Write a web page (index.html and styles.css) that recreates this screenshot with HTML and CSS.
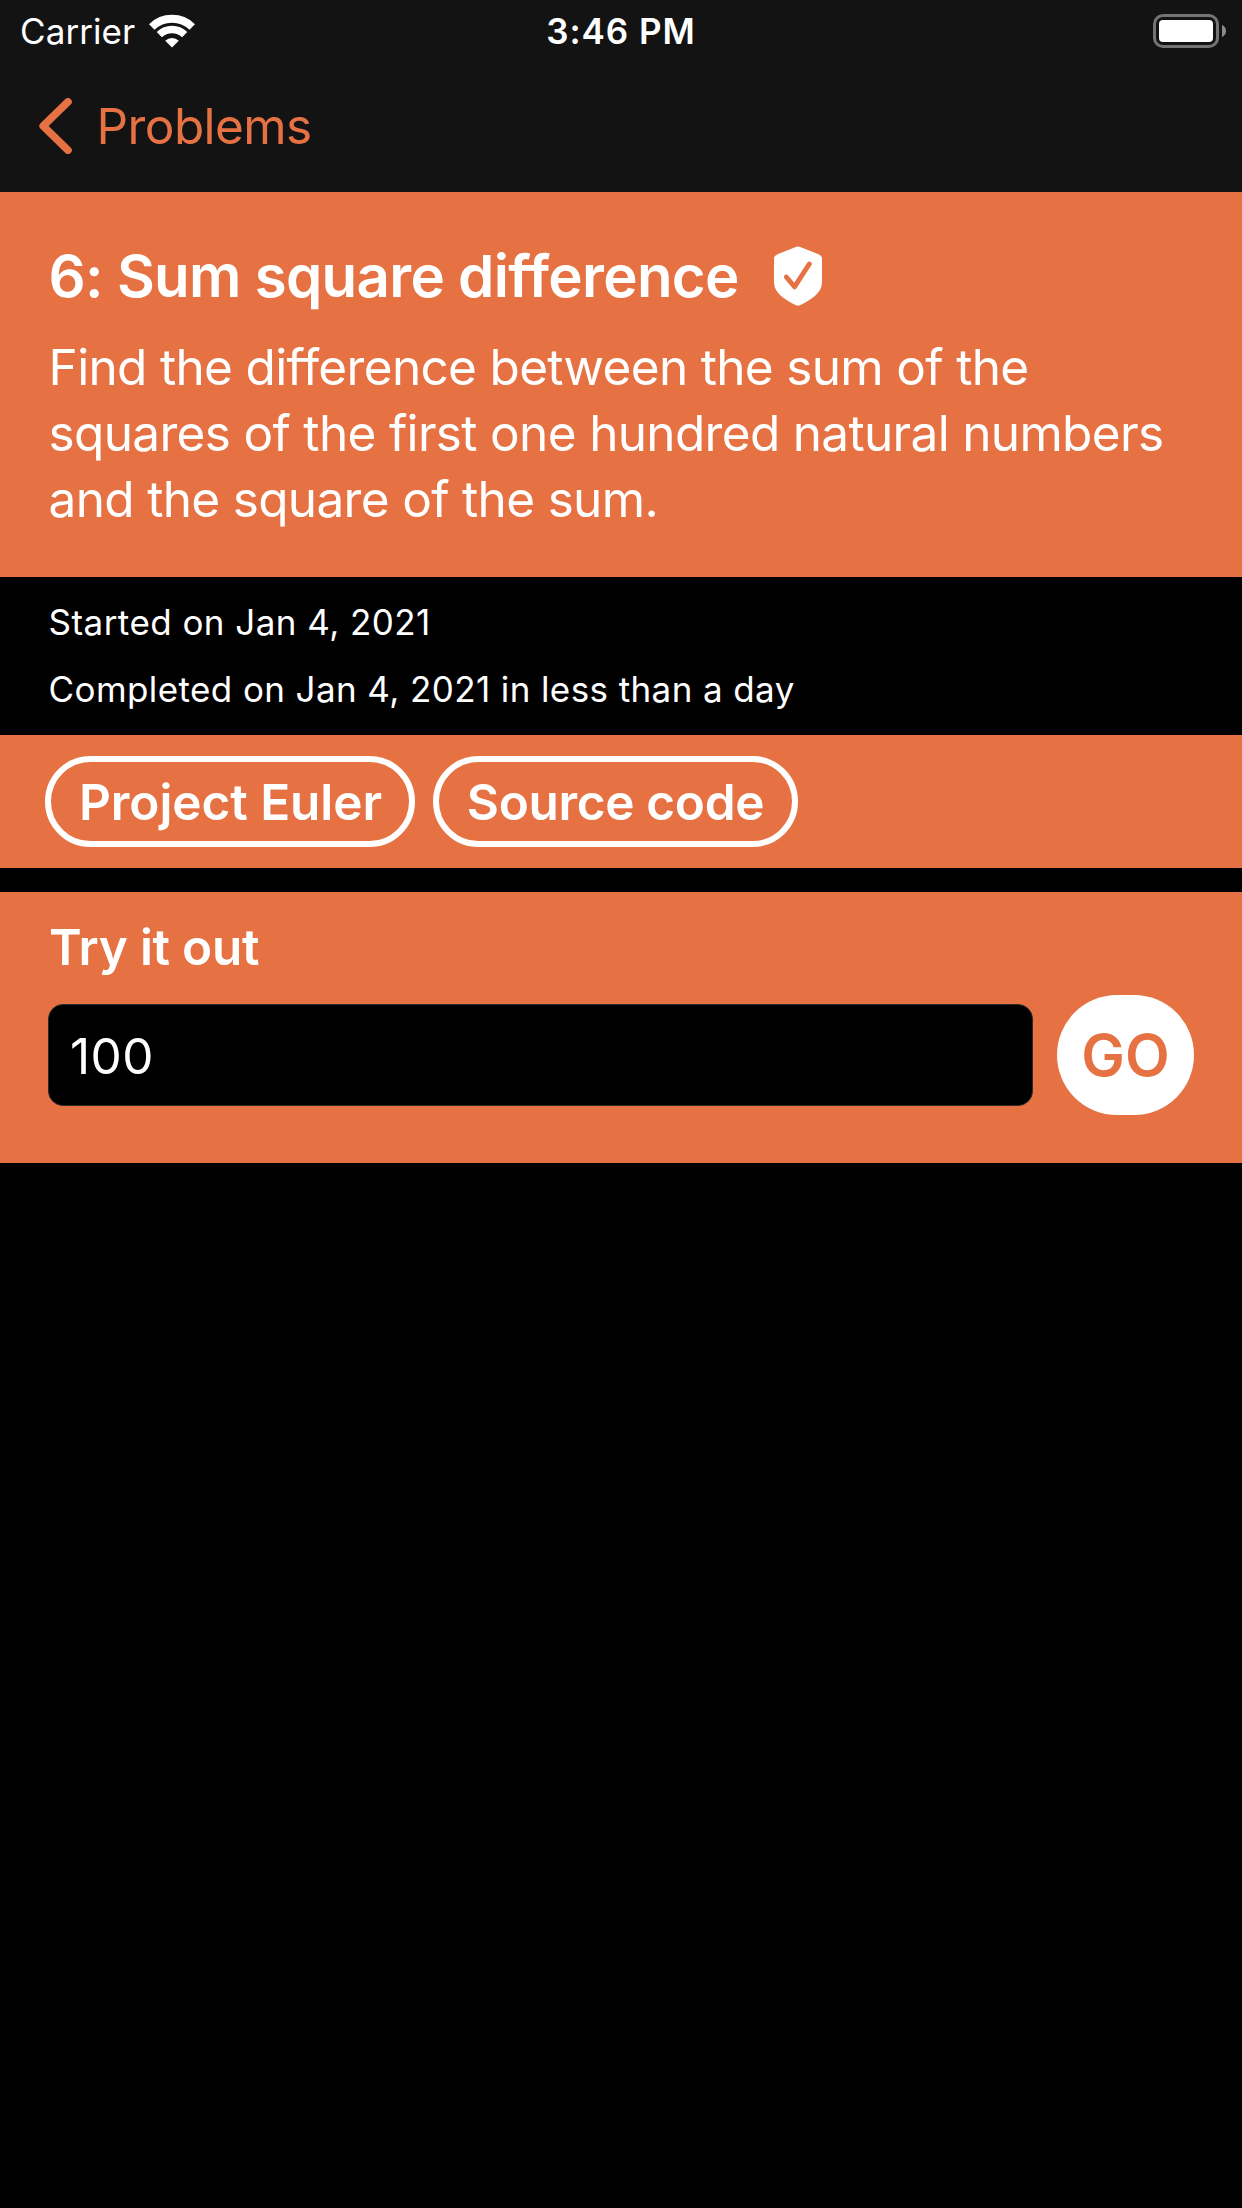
FILE: index.html
```html
<!DOCTYPE html>
<html lang="en">
<head>
<meta charset="utf-8">
<title>Sum square difference</title>
<link rel="stylesheet" href="styles.css">
</head>
<body>
<header class="top">
  <div class="status">
    <div class="carrier">
      <span>Carrier</span>
      <svg class="wifi" width="48" height="34" viewBox="0 0 48 34" fill="none" stroke="#fff">
        <path d="M3.8 13A29 29 0 0 1 44.2 13" stroke-width="8"/>
        <path d="M11.3 20.6A18.3 18.3 0 0 1 36.7 20.6" stroke-width="7.4"/>
        <path d="M24 33.5L17.2 26.7A9.7 9.7 0 0 1 30.8 26.7Z" fill="#fff" stroke="none"/>
      </svg>
    </div>
    <time class="clock">3:46 PM</time>
    <svg class="battery" width="73" height="34" viewBox="0 0 73 34">
      <rect x="1.5" y="1.5" width="63" height="31" rx="8.5" fill="none" stroke="#747474" stroke-width="3"/>
      <rect x="6" y="6" width="54" height="22" rx="4" fill="#fff"/>
      <path d="M69 11Q73 12.8 73 17Q73 21.2 69 23Z" fill="#8a8a8a"/>
    </svg>
  </div>
  <nav class="nav">
    <svg width="33" height="56" viewBox="0 0 33 56" fill="none" stroke="currentColor" stroke-width="7.6" stroke-linecap="round" stroke-linejoin="round"><path d="M29 3.8L4.2 28L29 52.2"/></svg>
    <span>Problems</span>
  </nav>
</header>
<main>
  <section class="summary">
    <div class="title-row">
      <h1 class="title">6: Sum square difference</h1>
      <svg width="48" height="60" viewBox="0 0 48 60">
        <path d="M21.8 .9Q24 0 26.2 .9L44 8Q48 9.8 48 12.5V36.5C48 47 37 53.5 26.5 59Q24 60.2 21.5 59C11 53.5 0 47 0 36.5V12.5Q0 9.8 4 8Z" fill="#fff"/>
        <path d="M12.3 31L20.5 40.8L35.3 18" fill="none" stroke="#e67243" stroke-width="4.9" stroke-linecap="round" stroke-linejoin="round"/>
      </svg>
    </div>
    <p class="description">Find the difference between the sum of the<br>squares of the first one hundred natural numbers<br>and the square of the sum.</p>
  </section>
  <section class="dates">
    <p class="started">Started on Jan 4, 2021</p>
    <p>Completed on Jan 4, 2021 in less than a day</p>
  </section>
  <section class="links">
    <button class="pill pill-euler">Project Euler</button>
    <button class="pill pill-source">Source code</button>
  </section>
  <section class="try">
    <h2 class="try-title">Try it out</h2>
    <div class="try-row">
      <div class="field">100</div>
      <button class="go">GO</button>
    </div>
  </section>
</main>
</body>
</html>
```
FILE: styles.css
```css
* { box-sizing: border-box; }
body {
  margin: 0;
  min-height: 2208px;
  background: #000;
  color: #fff;
  font-family: Inter, "Liberation Sans", sans-serif;
}
h1, h2, p { margin: 0; }
button { font: inherit; color: inherit; padding: 0; }
svg { display: block; flex: none; }

.top { height: 192px; background: #131313; }
.status {
  display: grid;
  grid-template-columns: 1fr auto 1fr;
  align-items: center;
  height: 60px;
  padding: 0 16px 0 20px;
  font-size: 35px;
  line-height: 62px;
}
.carrier { display: flex; align-items: center; gap: 13px; letter-spacing: .08px; }
.clock { margin-right: 4px; font-weight: 560; letter-spacing: .95px; }
.battery { justify-self: end; }
.nav {
  display: flex;
  align-items: center;
  gap: 24.6px;
  height: 132px;
  padding-left: 39px;
  color: #e67243;
  font-size: 49.5px;
  letter-spacing: -.6px;
}

.summary { height: 385px; padding: 48px 48px 0 48.6px; background: #e67243; }
.title-row { display: flex; align-items: center; gap: 35.5px; height: 72px; }
.title {
  font-size: 58.2px;
  font-weight: 600;
  line-height: 72px;
  letter-spacing: -.69px;
}
.description {
  margin-top: 22px;
  font-size: 49.5px;
  line-height: 66px;
  letter-spacing: -.67px;
  white-space: nowrap;
}

.dates {
  height: 158px;
  padding: 12px 48.6px;
  font-size: 35px;
  line-height: 67px;
  letter-spacing: .4px;
}
.started { letter-spacing: .45px; }

.links {
  display: flex;
  align-items: center;
  gap: 18px;
  height: 133px;
  padding-left: 45px;
  background: #e67243;
}
.pill {
  height: 91px;
  border: 6px solid #fff;
  border-radius: 45.5px;
  background: none;
  font-size: 49.5px;
  font-weight: 600;
}
.pill-euler { width: 370px; padding-left: 1px; letter-spacing: -.05px; }
.pill-source { width: 365px; letter-spacing: -.32px; }

.try { height: 271px; margin-top: 24px; padding: 24px 48px 48px; background: #e67243; }
.try-title {
  padding-left: 1px;
  font-size: 49.5px;
  font-weight: 600;
  line-height: 62px;
  letter-spacing: -.25px;
}
.try-row { display: flex; align-items: center; gap: 24px; margin-top: 17px; }
.field {
  flex: 1;
  height: 102px;
  padding-left: 21px;
  border: 1px solid #2b2b2b;
  border-radius: 15px;
  background: #000;
  font-size: 49.5px;
  line-height: 102px;
  letter-spacing: .45px;
}
.go {
  width: 137px;
  height: 120px;
  border: 0;
  border-radius: 60px;
  background: #fff;
  color: #e67243;
  font-size: 58.2px;
  font-weight: 600;
}
```
